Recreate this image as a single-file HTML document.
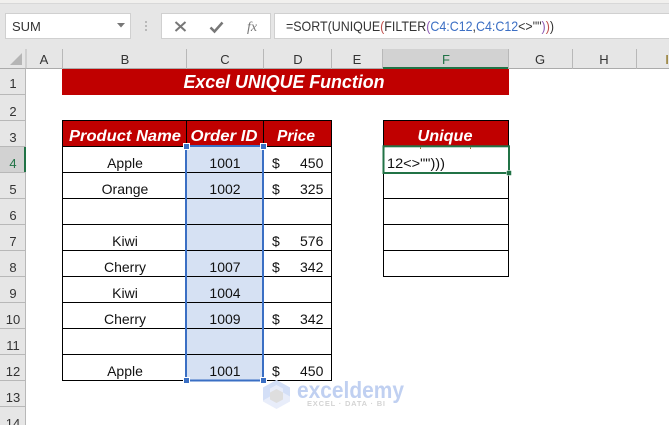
<!DOCTYPE html>
<html><head><meta charset="utf-8"><style>
html,body{margin:0;padding:0;background:#fff;width:669px;height:425px;overflow:hidden}
svg{display:block}
text{font-family:"Liberation Sans",sans-serif;font-size:14px;fill:#111}
.c{text-anchor:middle}
.h{font-weight:bold;font-style:italic;fill:#fff;font-size:16px;text-anchor:middle}
.l{font-size:13px;fill:#333;text-anchor:middle}
.f{font-size:14px;fill:#333}
</style></head><body>
<svg width="669" height="425" viewBox="0 0 669 425" xmlns="http://www.w3.org/2000/svg">
<rect width="669" height="69" fill="#e6e6e6"/>
<rect width="669" height="3" fill="#f1f0ee"/>
<rect y="3" width="669" height="1" fill="#d8d8d8"/>
<rect x="5.500" y="13.500" width="125" height="25" fill="#fff" stroke="#d0d0d0"/>
<text x="12" y="31" class="f" style="font-size:13px">SUM</text>
<path d="M117 23h8l-4 4.500z" fill="#777"/>
<path d="M146 21v2M146 25v2M146 29v2" stroke="#aaa" stroke-width="1.500"/>
<rect x="161.500" y="13.500" width="109" height="25" fill="#fff" stroke="#d0d0d0"/>
<path d="M175.500 22l10 9M185.500 22l-10 9" stroke="#777" stroke-width="2" fill="none"/>
<path d="M210.500 27.500l4 4 8-9" stroke="#777" stroke-width="2.500" fill="none"/>
<text x="247" y="31" style="font-family:'Liberation Serif',serif;font-style:italic;font-size:14px;fill:#777">fx</text>
<rect x="274.500" y="13.500" width="395" height="25" fill="#fff" stroke="#d0d0d0"/>
<text x="286" y="31" class="f" textLength="268" lengthAdjust="spacingAndGlyphs">=SORT(UNIQUE<tspan fill="#c0504d">(</tspan>FILTER<tspan fill="#8e5bb5">(</tspan><tspan fill="#3c6fc4">C4:C12</tspan>,<tspan fill="#3c6fc4">C4:C12</tspan>&lt;&gt;""<tspan fill="#8e5bb5">)</tspan><tspan fill="#c0504d">)</tspan>)</text>

<!-- column header -->
<rect y="49" width="669" height="20" fill="#e6e6e6"/>
<rect x="383" y="49" width="126" height="20" fill="#d2d2d2"/>
<rect y="68" width="383" height="1" fill="#ababab"/>
<rect x="509" y="68" width="160" height="1" fill="#ababab"/>
<rect x="383" y="67" width="126" height="2" fill="#217346"/>
<path d="M22 53v12H10z" fill="#b5b5b5"/>
<path d="M26 49v20M62.500 49v20M186.500 49v20M263.500 49v20M331.500 49v20M382.500 49v20M508.500 49v20M572.500 49v20M636.500 49v20" stroke="#b8b8b8" fill="none"/>
<text x="44" y="64" class="l">A</text><text x="125" y="64" class="l">B</text><text x="225" y="64" class="l">C</text><text x="298" y="64" class="l">D</text><text x="357" y="64" class="l">E</text><text x="446" y="64" class="l" style="fill:#217346">F</text><text x="540" y="64" class="l">G</text><text x="604" y="64" class="l">H</text><text x="667" y="64" class="l" style="fill:#7f6000">I</text>

<!-- row header -->
<rect y="69" width="26" height="356" fill="#e6e6e6"/>
<rect y="146" width="26" height="26" fill="#d2d2d2"/>
<rect x="24" y="146" width="2" height="26" fill="#217346"/>
<path d="M0 94.500h26M0 120.500h26M0 146.500h26M0 172.500h26M0 198.500h26M0 224.500h26M0 250.500h26M0 276.500h26M0 302.500h26M0 328.500h26M0 354.500h26M0 380.500h26M0 406.500h26" stroke="#b8b8b8"/>
<path d="M25.500 69v77M25.500 172v253" stroke="#b8b8b8"/>
<g>
<text x="13" y="88" class="l">1</text><text x="13" y="116" class="l">2</text><text x="13" y="142" class="l">3</text><text x="13" y="168" class="l" style="fill:#217346">4</text><text x="13" y="194" class="l">5</text><text x="13" y="220" class="l">6</text><text x="13" y="246" class="l">7</text><text x="13" y="272" class="l">8</text><text x="13" y="298" class="l">9</text><text x="13" y="324" class="l">10</text><text x="13" y="350" class="l">11</text><text x="13" y="376" class="l">12</text><text x="13" y="402" class="l">13</text><text x="13" y="428" class="l">14</text>
</g>

<!-- title -->
<rect x="62" y="69" width="447" height="26" fill="#c00000"/>
<text x="284" y="88" class="h" style="font-size:18px" textLength="201" lengthAdjust="spacingAndGlyphs">Excel UNIQUE Function</text>

<!-- selection fill -->
<rect x="187" y="146" width="76" height="235" fill="#d6e1f3"/>

<!-- table header -->
<rect x="62" y="120" width="270" height="26" fill="#c00000"/>
<rect x="383" y="120" width="126" height="26" fill="#c00000"/>
<text x="125" y="141" class="h" textLength="112" lengthAdjust="spacingAndGlyphs">Product Name</text>
<text x="224" y="141" class="h" textLength="67" lengthAdjust="spacingAndGlyphs">Order ID</text>
<text x="296" y="141" class="h" textLength="38" lengthAdjust="spacingAndGlyphs">Price</text>
<text x="445" y="141" class="h" textLength="55" lengthAdjust="spacingAndGlyphs">Unique</text>

<!-- grid lines -->
<path d="M62 120.500h270M62 146.500h270M62 172.500h270M62 198.500h270M62 224.500h270M62 250.500h270M62 276.500h270M62 302.500h270M62 328.500h270M62 354.500h270M62 380.500h270M62.500 120v261M186.500 120v261M263.500 120v261M331.500 120v261" stroke="#000" fill="none"/>
<path d="M383 120.500h126M383 146.500h126M383 172.500h126M383 198.500h126M383 224.500h126M383 250.500h126M383 276.500h126M383.500 120v157M508.500 120v157" stroke="#000" fill="none"/>

<!-- data -->
<g>
<text x="125" y="168" class="c">Apple</text><text x="125" y="194" class="c">Orange</text><text x="125" y="246" class="c">Kiwi</text><text x="125" y="272" class="c">Cherry</text><text x="125" y="298" class="c">Kiwi</text><text x="125" y="324" class="c">Cherry</text><text x="125" y="376" class="c">Apple</text>
<text x="225" y="168" class="c">1001</text><text x="225" y="194" class="c">1002</text><text x="225" y="272" class="c">1007</text><text x="225" y="298" class="c">1004</text><text x="225" y="324" class="c">1009</text><text x="225" y="376" class="c">1001</text>
<text x="272" y="168">$</text><text x="300" y="168">450</text>
<text x="272" y="194">$</text><text x="300" y="194">325</text>
<text x="272" y="246">$</text><text x="300" y="246">576</text>
<text x="272" y="272">$</text><text x="300" y="272">342</text>
<text x="272" y="324">$</text><text x="300" y="324">342</text>
<text x="272" y="376">$</text><text x="300" y="376">450</text>
</g>

<!-- selection border -->
<rect x="186" y="146" width="77" height="234.500" fill="none" stroke="#3a6fc4" stroke-width="2"/>
<rect x="183.500" y="143.500" width="6" height="6" fill="#3a6fc4" stroke="#fff"/>
<rect x="260.500" y="143.500" width="6" height="6" fill="#3a6fc4" stroke="#fff"/>
<rect x="183.500" y="377.500" width="6" height="6" fill="#3a6fc4" stroke="#fff"/>
<rect x="260.500" y="377.500" width="6" height="6" fill="#3a6fc4" stroke="#fff"/>

<!-- active cell -->
<rect x="384" y="147" width="124" height="25" fill="#fff"/>
<text x="387" y="168" textLength="58" lengthAdjust="spacingAndGlyphs">12&lt;&gt;"")))</text>
<path d="M420.500 147.500v1.500M470.500 147.500v1.500" stroke="#a06a30" stroke-width="1"/>
<rect x="383.500" y="146.300" width="125.500" height="26.700" fill="none" stroke="#217346" stroke-width="2"/>
<rect x="506.500" y="170.500" width="5" height="5" fill="#217346" stroke="#fff" stroke-width=".5"/>

<!-- watermark -->
<g>
<path d="M276.500 380l13.500 7.500v14l-13.500 7.500-13.500-7.500v-14z" fill="#e8edfa"/>
<path d="M276.500 380l13.500 7.500v9l-7-4v-4l-6.500-3.500-6.500 3.500v8l-7 4v-13z" fill="#d3dff7"/>
<path d="M276.500 389l6.500 3.500v7l-6.500 3.500-6.500-3.500v-7z" fill="#dedede"/>
<text x="297" y="398" style="font-size:23px;font-weight:bold;fill:#c0d0f1" textLength="107" lengthAdjust="spacingAndGlyphs">exceldemy</text>
<text x="307" y="406" style="font-size:7.500px;font-weight:bold;fill:#d4d4d4" textLength="78">EXCEL · DATA · BI</text>
</g>
</svg>
</body></html>
